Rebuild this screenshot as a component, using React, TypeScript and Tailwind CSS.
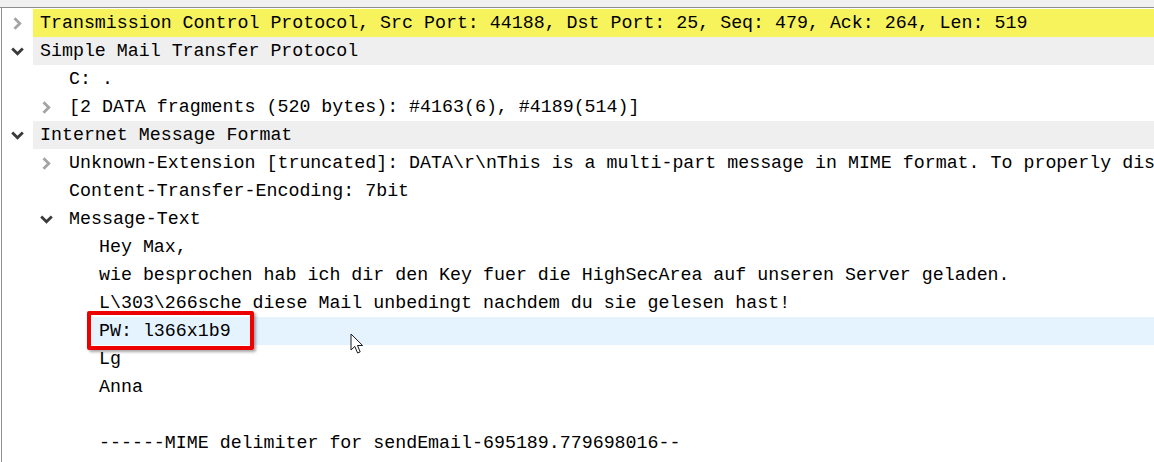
import React from "react";

type Row = {
  level: 0 | 1 | 2;
  text: string;
  chevron?: "open" | "closed";
  bg?: string;
};

const rows: Row[] = [
  {
    level: 0,
    chevron: "closed",
    bg: "bg-[#f7f35c]",
    text: "Transmission Control Protocol, Src Port: 44188, Dst Port: 25, Seq: 479, Ack: 264, Len: 519",
  },
  { level: 0, chevron: "open", bg: "bg-[#efefef]", text: "Simple Mail Transfer Protocol" },
  { level: 1, text: "C: ." },
  { level: 1, chevron: "closed", text: "[2 DATA fragments (520 bytes): #4163(6), #4189(514)]" },
  { level: 0, chevron: "open", bg: "bg-[#efefef]", text: "Internet Message Format" },
  {
    level: 1,
    chevron: "closed",
    text: "Unknown-Extension [truncated]: DATA\\r\\nThis is a multi-part message in MIME format. To properly dis",
  },
  { level: 1, text: "Content-Transfer-Encoding: 7bit" },
  { level: 1, chevron: "open", text: "Message-Text" },
  { level: 2, text: "Hey Max," },
  { level: 2, text: "wie besprochen hab ich dir den Key fuer die HighSecArea auf unseren Server geladen." },
  { level: 2, text: "L\\303\\266sche diese Mail unbedingt nachdem du sie gelesen hast!" },
  { level: 2, bg: "bg-[#e5f3ff]", text: "PW: l366x1b9" },
  { level: 2, text: "Lg" },
  { level: 2, text: "Anna" },
  { level: 2, text: "" },
  { level: 2, text: "------MIME delimiter for sendEmail-695189.779698016--" },
];

const indent = ["ml-0", "ml-[29px]", "ml-[59px]"];

function Chevron({ kind }: { kind: "open" | "closed" }) {
  if (kind === "open") {
    return (
      <svg width="13" height="9" viewBox="0 0 13 9">
        <path d="M1.2 1.5 L6.5 6.8 L11.8 1.5" fill="none" stroke="#3a3a3a" strokeWidth="2.8" />
      </svg>
    );
  }
  return (
    <svg width="9" height="13" viewBox="0 0 9 13">
      <path d="M1.5 1.2 L6.8 6.5 L1.5 11.8" fill="none" stroke="#a4a4a4" strokeWidth="2.8" />
    </svg>
  );
}

export default function App() {
  return (
    <main className="relative w-[1154px] h-[462px] overflow-hidden bg-white font-['Liberation_Mono',monospace] text-[18.3px] text-black">
      {/* toolbar edge */}
      <div className="h-[7px] bg-[#f0f0f0]" />
      <div className="h-px bg-[#8e8e8e]" />

      <div className="h-[454px] ml-px border-l border-[#8e8e8e] pt-px">
        {rows.map((r, i) => (
          <div key={i} className="flex h-[28px] items-stretch whitespace-nowrap">
            <div className={`flex shrink-0 ${indent[r.level]}`}>
              <div className="w-[31px] flex items-center justify-center">
                {r.chevron && <Chevron kind={r.chevron} />}
              </div>
            </div>
            <div className={`flex-1 pl-[7px] leading-[28px] ${r.bg ?? ""}`}>{r.text}</div>
          </div>
        ))}
      </div>

      {/* red highlight box */}
      <div className="absolute left-[87px] top-[311px] w-[167px] h-[39px] border-[4px] border-[#ec0000] rounded-[2px] shadow-[2px_2px_3px_rgba(0,0,0,0.35)]" />

      {/* mouse cursor */}
      <svg className="absolute left-[350px] top-[333px]" width="14" height="22" viewBox="0 0 14 22">
        <path
          d="M1 1 L1 17 L4.8 13.4 L7.6 20 L10.2 18.9 L7.5 12.5 L12.6 12.5 Z"
          fill="#ffffff"
          stroke="#1a1a1a"
          strokeWidth="1"
          strokeLinejoin="miter"
        />
      </svg>
    </main>
  );
}
